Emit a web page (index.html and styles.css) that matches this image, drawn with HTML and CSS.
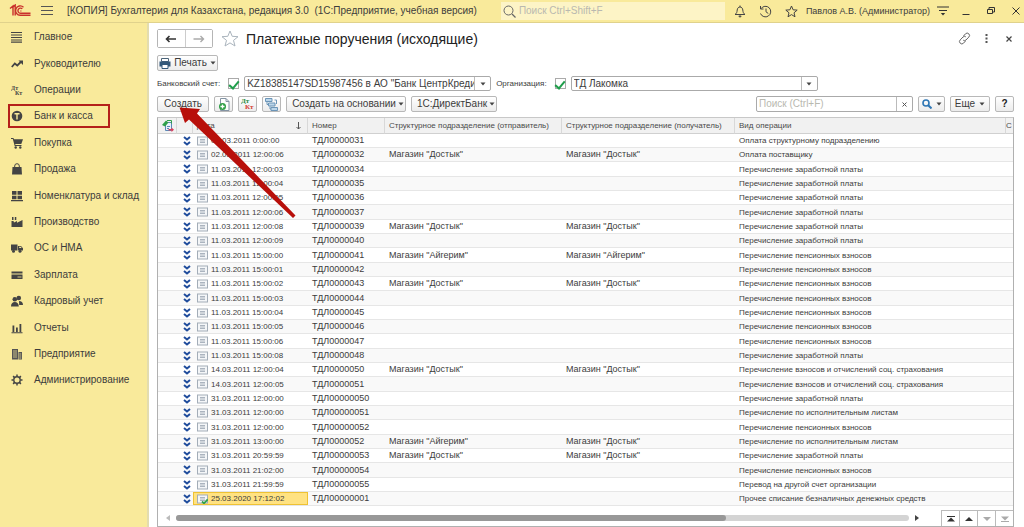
FILE: index.html
```html
<!DOCTYPE html>
<html lang="ru">
<head>
<meta charset="utf-8">
<title>Платежные поручения (исходящие)</title>
<link rel="stylesheet" href="styles.css">
</head>
<body>
<svg class="sprite" aria-hidden="true">
  <symbol id="chev" viewBox="0 0 8 10"><path d="M1 1l3 2.500L7 1M1 6l3 2.500L7 6" fill="none" stroke="#1f4c9c" stroke-width="2"/></symbol>
  <symbol id="doc" viewBox="0 0 11 10"><rect x=".5" y="1" width="10" height="8" fill="#f4f6f8" stroke="#a3adb8"/><path d="M3 3.500h5M3 5h5M3 6.500h5" stroke="#a3adb8" stroke-width=".9"/></symbol>
  <symbol id="caret" viewBox="0 0 6 4"><path d="M.5.5h5L3 3.500z" fill="#444"/></symbol>
</svg>
<header class="topbar">
  <svg class="logo" viewBox="0 0 22 14" fill="none" stroke="#c9302c" stroke-width="1.400"><path d="M1 4.500L4 2v9.500M3 4L6.200 1v10.500"/><path d="M14.500 3.200A4.700 4.700 0 1 0 11.500 11.300H21.500M13.300 4.800A2.600 2.600 0 1 0 11.500 9.300H21.500"/><path d="M11.500 7h.8"/></svg>
  <button class="icon-btn menu-btn" aria-label="Меню"><svg width="12" height="10" viewBox="0 0 12 10" stroke="#555" stroke-width="1"><path d="M0 .5h12M0 4.500h12M0 8.500h12"/></svg></button>
  <span class="app-title">[КОПИЯ] Бухгалтерия для Казахстана, редакция 3.0&nbsp; (1С:Предприятие, учебная версия)</span>
  <label class="global-search"><svg width="13" height="13" viewBox="0 0 13 13" fill="none" stroke="#666"><circle cx="5.500" cy="5.500" r="4.500"/><path d="M9 9l3.500 3.500" stroke-width="1.300"/></svg><input type="text" placeholder="Поиск Ctrl+Shift+F" aria-label="Поиск"></label>
  <div class="top-tools">
    <button class="icon-btn" aria-label="Уведомления"><svg width="12" height="13" viewBox="0 0 12 13" fill="none" stroke="#444"><path d="M1 9.500c1.700-1 2-2.500 2.200-4.500C3.400 3.300 4.300 2 6 2s2.600 1.300 2.800 3c.2 2 .5 3.500 2.200 4.500z"/><path d="M4.800 11h2.400L6 12.300zM6 .5V2"/></svg></button>
    <button class="icon-btn" aria-label="История"><svg width="13" height="13" viewBox="0 0 13 13" fill="none" stroke="#444"><path d="M2 3.700A5.300 5.300 0 1 1 1.500 8.500M1.500 1v3h3M7 3.500v3.300l2.300 1.700"/></svg></button>
    <button class="icon-btn" aria-label="Избранное"><svg width="13" height="13" viewBox="0 0 13 13" fill="none" stroke="#444"><path d="M6.500 1l1.600 3.800 4.100.3L9 7.800l1 4-3.500-2.200L3 11.800l1-4L.8 5.100l4.100-.3z"/></svg></button>
    <span class="user">Павлов А.В. (Администратор)</span>
    <button class="icon-btn" aria-label="Настройки"><svg width="12" height="10" viewBox="0 0 12 10"><path d="M0 1h12M2 4.500h8" stroke="#333"/><path d="M3.800 7h4.400L6 9.500z" fill="#333"/></svg></button>
    <button class="icon-btn win" aria-label="Свернуть"><svg width="8" height="10" viewBox="0 0 8 10"><path d="M.5 8.500h7" stroke="#333"/></svg></button>
    <button class="icon-btn win" aria-label="Развернуть"><svg width="8" height="8" viewBox="0 0 8 8" fill="none" stroke="#333"><path d="M.5 2.500h5v4h-5zM2 2.500v-2h5.500V5H5.500"/></svg></button>
    <button class="icon-btn win" aria-label="Закрыть"><svg width="8" height="8" viewBox="0 0 8 8" stroke="#333"><path d="M.5.5l7 7M7.500.5l-7 7"/></svg></button>
  </div>
</header>
<div class="shell">
  <nav class="side">
    <a href="#"><svg viewBox="0 0 12 12"><path d="M0 1.500h11M0 4h11M0 6.500h11M0 9h11M0 11.200h11" stroke="#444" stroke-width="1.200"/></svg>Главное</a>
    <a href="#"><svg viewBox="0 0 12 12"><path d="M.8 9l3-3.500 2.500 2L9.800 4" fill="none" stroke="#444" stroke-width="1.800"/><path d="M7.500 2.500H12V7z" fill="#444"/></svg>Руководителю</a>
    <a href="#"><svg viewBox="0 0 12 12" class="glyph-text"><text x="0" y="6">Дт</text><text x="4" y="11">Кт</text></svg>Операции</a>
    <a href="#" class="marked"><svg viewBox="0 0 12 12"><circle cx="6" cy="6" r="5.300" fill="#444"/><path d="M3.500 3.800h5M6 3.800V9.500" stroke="#f9ea9b" stroke-width="1.400"/></svg>Банк и касса</a>
    <a href="#"><svg viewBox="0 0 12 12" fill="#444"><path d="M0 1h2.500l.4 1.200H12L10.300 7H4.200l.3 1H10.500v1H3.700L1.800 2H0z"/><circle cx="4.700" cy="10.500" r="1.200"/><circle cx="9.300" cy="10.500" r="1.200"/></svg>Покупка</a>
    <a href="#"><svg viewBox="0 0 12 12" fill="#444"><path d="M1.500 4h9l.5 7.500H1z"/><path d="M3.700 5.500V3a2.300 2.300 0 0 1 4.600 0v2.500" fill="none" stroke="#444"/></svg>Продажа</a>
    <a href="#"><svg viewBox="0 0 12 12" fill="#444"><path d="M1 1h4.500v3.800H1zM6.500 1H11v3.800H6.500zM1 5.800h4.500v3.500H1zM6.500 5.800H11v3.500H6.500zM0 10h12v1.200H0z"/></svg>Номенклатура и склад</a>
    <a href="#"><svg viewBox="0 0 12 12" fill="#444"><path d="M.5 11V5h2L3 6.500 6 5v1.700L11.500 4v7zM1 1h1.500v3H1zM3.800 1h1.500v3H3.800z"/></svg>Производство</a>
    <a href="#"><svg viewBox="0 0 12 12" fill="#444"><path d="M0 2.500h6.500v6H0zM7 4h3l2 2.300v2.200H7z"/><circle cx="2.500" cy="9.200" r="1.500"/><circle cx="9" cy="9.200" r="1.500"/><path d="M8.200 4.800h1.500l1 1.300H8.200z" fill="#f9ea9b"/></svg>ОС и НМА</a>
    <a href="#"><svg viewBox="0 0 12 12" fill="#444"><path d="M.5 2.500h11v2H.5zM.5 5.500h11V10H.5z"/><path d="M6.500 8h4" stroke="#f9ea9b" stroke-width=".8"/></svg>Зарплата</a>
    <a href="#"><svg viewBox="0 0 12 12" fill="#444"><circle cx="7.800" cy="3" r="2.300"/><circle cx="3.800" cy="4.300" r="2.300"/><path d="M8 6c2.500 0 4 1.200 4 4H8.200zM0 11.500C0 8.500 1.500 7 3.800 7s4 1.500 4 4.500z"/></svg>Кадровый учет</a>
    <a href="#"><svg viewBox="0 0 12 12" fill="#444"><path d="M1.500 3.500h1.800V10H1.500zM5 5.500h1.800V10H5zM8.500 2h1.800v8H8.500zM.5 10.200h11v1H.5z"/></svg>Отчеты</a>
    <a href="#"><svg viewBox="0 0 12 12"><path d="M1 1h6v10.500H1zM7.500 4H11v7.500H7.500z" fill="#555"/><path d="M2 3h4M2 5h4M2 7h4M2 9h4M8.200 6h2M8.200 8h2M8.200 10h2" stroke="#f9ea9b" stroke-width=".7"/></svg>Предприятие</a>
    <a href="#"><svg viewBox="0 0 12 12" fill="none" stroke="#444"><circle cx="6" cy="6" r="3.200" stroke-width="1.400"/><path d="M6 .5v2M6 9.500v2M.5 6h2M9.500 6h2M2.100 2.100l1.500 1.500M8.400 8.400l1.500 1.500M2.100 9.900l1.500-1.500M8.400 3.600l1.500-1.500" stroke-width="1.500"/></svg>Администрирование</a>
  </nav>
  <main class="work">
    <div class="head">
      <div class="nav-pair">
        <button aria-label="Назад"><svg width="12" height="8" viewBox="0 0 12 8" fill="none" stroke="#333" stroke-width="1.600"><path d="M1.500 4H11M4.500 1l-3 3 3 3"/></svg></button>
        <button aria-label="Вперед"><svg width="12" height="8" viewBox="0 0 12 8" fill="none" stroke="#aaa" stroke-width="1.400"><path d="M.5 4h10M7.500 1l3 3-3 3"/></svg></button>
      </div>
      <button class="icon-btn fav" aria-label="В избранное"><svg width="18" height="17" viewBox="0 0 18 17" fill="none" stroke="#aab4bd"><path d="M9 1l2.200 5.300 5.800.4-4.500 3.700 1.500 5.600-5-3.100L4 16l1.500-5.600L1 6.700l5.800-.4z"/></svg></button>
      <h1>Платежные поручения (исходящие)</h1>
      <div class="head-tools">
        <button class="icon-btn" aria-label="Ссылка"><svg width="13" height="13" viewBox="0 0 13 13" fill="none" stroke="#666"><path d="M5.500 4l2-2.200a2.200 2.200 0 0 1 3.300 3.300L8 8a2.200 2.200 0 0 1-2.800.2M7.500 9l-2 2.200a2.200 2.200 0 0 1-3.300-3.300L5 5a2.200 2.200 0 0 1 2.800-.2"/></svg></button>
        <button class="icon-btn" aria-label="Еще"><svg width="3" height="10" viewBox="0 0 3 10" fill="#555"><path d="M.5 0h2v2h-2zM.5 3.500h2v2h-2zM.5 7h2v2h-2z"/></svg></button>
        <button class="icon-btn" aria-label="Закрыть"><svg width="6" height="6" viewBox="0 0 6 6" stroke="#444" stroke-width="1.200"><path d="M.5.5l5 5M5.500.5l-5 5"/></svg></button>
      </div>
    </div>
    <div class="print-row">
      <button class="btn print"><svg width="12" height="11" viewBox="0 0 12 11"><path d="M2.500.5h7v3h-7z" fill="#fff" stroke="#4b6378"/><path d="M.5 3.500h11v5H.5z" fill="#35597a"/><path d="M3 6.500h6V10.500H3z" fill="#fff" stroke="#35597a"/></svg>Печать<svg class="caret"><use href="#caret"/></svg></button>
    </div>
    <div class="filters">
      <label for="acc-on">Банковский счет:</label><input type="checkbox" id="acc-on" checked>
      <div class="combo"><input type="text" value="KZ18385147SD15987456 в АО &quot;Банк ЦентрКредит&quot;" aria-label="Банковский счет"><button aria-label="Выбрать счет"><svg class="caret"><use href="#caret"/></svg></button></div>
      <label for="org-on" class="org-label">Организация:</label><input type="checkbox" id="org-on" checked>
      <div class="combo"><input type="text" value="ТД Лакомка" aria-label="Организация"><button aria-label="Выбрать организацию"><svg class="caret"><use href="#caret"/></svg></button></div>
    </div>
    <div class="toolbar">
      <button class="btn create">Создать</button>
      <button class="btn sq" aria-label="Скопировать"><svg width="12" height="13" viewBox="0 0 12 13"><path d="M2.500.5h5.500l3 3v9h-8.500z" fill="#fff" stroke="#8494a4"/><path d="M8 .5v3h3" fill="none" stroke="#8494a4"/><circle cx="4.500" cy="8.500" r="3.500" fill="#2e9e45"/><path d="M4.500 6.500v4M2.500 8.500h4" stroke="#fff" stroke-width="1.300"/></svg></button>
      <button class="btn sq" aria-label="Проводки"><svg width="14" height="14" viewBox="0 0 14 14" class="glyph-text"><text x="0" y="6" class="g">Дт</text><text x="4" y="12" class="r">Кт</text></svg></button>
      <button class="btn sq" aria-label="Структура подчиненности"><svg width="13" height="13" viewBox="0 0 13 13" fill="#bcd6ea" stroke="#6b95b8"><path d="M2 3.500v3h2M5 8.500v2.500h2M9.500 2h2v4" fill="none"/><path d="M.5.5h6.500v3H.5zM3.500 5h6.500v3H3.500zM6 9.500h6.500v3H6z"/></svg></button>
      <button class="btn based">Создать на основании<svg class="caret"><use href="#caret"/></svg></button>
      <button class="btn direct">1С:ДиректБанк<svg class="caret"><use href="#caret"/></svg></button>
      <div class="find"><input type="text" placeholder="Поиск (Ctrl+F)" aria-label="Поиск в списке"><button aria-label="Очистить"><svg width="5" height="5" viewBox="0 0 5 5" stroke="#555"><path d="M.5.5l4 4M4.500.5l-4 4"/></svg></button></div>
      <button class="btn look" aria-label="Найти"><svg width="10" height="10" viewBox="0 0 10 10" fill="none" stroke="#2f77b5" stroke-width="1.600"><circle cx="4" cy="4" r="3"/><path d="M6.200 6.200l3.300 3.300" stroke-width="2"/></svg><svg class="caret"><use href="#caret"/></svg></button>
      <button class="btn more">Еще<svg class="caret"><use href="#caret"/></svg></button>
      <button class="btn help" aria-label="Справка">?</button>
    </div>
    <section class="list">
      <table>
        <colgroup><col class="c-a"><col class="c-b"><col class="c-date"><col class="c-num"><col class="c-from"><col class="c-to"><col><col class="c-last"></colgroup>
        <thead><tr><th><svg width="12" height="12" viewBox="0 0 12 12"><path d="M3.500 2.500h6v8h-6z" fill="#e8f1f9" stroke="#5b88b5"/><path d="M0 5L4 .5l2.500 2L3 6.500z" fill="#2fa14a"/><path d="M5 .5h4.500v3" fill="none" stroke="#2fa14a"/><path d="M5 6.500h3M5 8.500h2" stroke="#5b88b5"/><path d="M6.500 9h3V7.500l2.500 2.300L9.500 12v-1.500h-3z" fill="#d8405e"/></svg></th><th></th><th><span class="sorted">Дата<svg width="5" height="8" viewBox="0 0 5 8" fill="none" stroke="#555"><path d="M2.500 0v7M.5 5l2 2 2-2"/></svg></span></th><th>Номер</th><th>Структурное подразделение (отправитель)</th><th>Структурное подразделение (получатель)</th><th>Вид операции</th><th>С</th></tr></thead>
        <tbody>
          <tr><td></td><td><svg class="ch"><use href="#chev"/></svg></td><td><svg class="dc"><use href="#doc"/></svg>02.03.2011 0:00:00</td><td>ТДЛ0000031</td><td></td><td></td><td>Оплата структурному подразделению</td><td></td></tr>
          <tr><td></td><td><svg class="ch"><use href="#chev"/></svg></td><td><svg class="dc"><use href="#doc"/></svg>02.03.2011 12:00:06</td><td>ТДЛ0000032</td><td>Магазин "Достык"</td><td>Магазин "Достык"</td><td>Оплата поставщику</td><td></td></tr>
          <tr><td></td><td><svg class="ch"><use href="#chev"/></svg></td><td><svg class="dc"><use href="#doc"/></svg>11.03.2011 12:00:03</td><td>ТДЛ0000034</td><td></td><td></td><td>Перечисление заработной платы</td><td></td></tr>
          <tr><td></td><td><svg class="ch"><use href="#chev"/></svg></td><td><svg class="dc"><use href="#doc"/></svg>11.03.2011 12:00:04</td><td>ТДЛ0000035</td><td></td><td></td><td>Перечисление заработной платы</td><td></td></tr>
          <tr><td></td><td><svg class="ch"><use href="#chev"/></svg></td><td><svg class="dc"><use href="#doc"/></svg>11.03.2011 12:00:05</td><td>ТДЛ0000036</td><td></td><td></td><td>Перечисление заработной платы</td><td></td></tr>
          <tr><td></td><td><svg class="ch"><use href="#chev"/></svg></td><td><svg class="dc"><use href="#doc"/></svg>11.03.2011 12:00:06</td><td>ТДЛ0000037</td><td></td><td></td><td>Перечисление заработной платы</td><td></td></tr>
          <tr><td></td><td><svg class="ch"><use href="#chev"/></svg></td><td><svg class="dc"><use href="#doc"/></svg>11.03.2011 12:00:08</td><td>ТДЛ0000039</td><td>Магазин "Достык"</td><td>Магазин "Достык"</td><td>Перечисление заработной платы</td><td></td></tr>
          <tr><td></td><td><svg class="ch"><use href="#chev"/></svg></td><td><svg class="dc"><use href="#doc"/></svg>11.03.2011 12:00:09</td><td>ТДЛ0000040</td><td></td><td></td><td>Перечисление заработной платы</td><td></td></tr>
          <tr><td></td><td><svg class="ch"><use href="#chev"/></svg></td><td><svg class="dc"><use href="#doc"/></svg>11.03.2011 15:00:00</td><td>ТДЛ0000041</td><td>Магазин "Айгерим"</td><td>Магазин "Айгерим"</td><td>Перечисление пенсионных взносов</td><td></td></tr>
          <tr><td></td><td><svg class="ch"><use href="#chev"/></svg></td><td><svg class="dc"><use href="#doc"/></svg>11.03.2011 15:00:01</td><td>ТДЛ0000042</td><td></td><td></td><td>Перечисление пенсионных взносов</td><td></td></tr>
          <tr><td></td><td><svg class="ch"><use href="#chev"/></svg></td><td><svg class="dc"><use href="#doc"/></svg>11.03.2011 15:00:02</td><td>ТДЛ0000043</td><td>Магазин "Достык"</td><td>Магазин "Достык"</td><td>Перечисление пенсионных взносов</td><td></td></tr>
          <tr><td></td><td><svg class="ch"><use href="#chev"/></svg></td><td><svg class="dc"><use href="#doc"/></svg>11.03.2011 15:00:03</td><td>ТДЛ0000044</td><td></td><td></td><td>Перечисление пенсионных взносов</td><td></td></tr>
          <tr><td></td><td><svg class="ch"><use href="#chev"/></svg></td><td><svg class="dc"><use href="#doc"/></svg>11.03.2011 15:00:04</td><td>ТДЛ0000045</td><td></td><td></td><td>Перечисление пенсионных взносов</td><td></td></tr>
          <tr><td></td><td><svg class="ch"><use href="#chev"/></svg></td><td><svg class="dc"><use href="#doc"/></svg>11.03.2011 15:00:05</td><td>ТДЛ0000046</td><td></td><td></td><td>Перечисление пенсионных взносов</td><td></td></tr>
          <tr><td></td><td><svg class="ch"><use href="#chev"/></svg></td><td><svg class="dc"><use href="#doc"/></svg>11.03.2011 15:00:06</td><td>ТДЛ0000047</td><td></td><td></td><td>Перечисление пенсионных взносов</td><td></td></tr>
          <tr><td></td><td><svg class="ch"><use href="#chev"/></svg></td><td><svg class="dc"><use href="#doc"/></svg>11.03.2011 15:00:08</td><td>ТДЛ0000048</td><td></td><td></td><td>Перечисление заработной платы</td><td></td></tr>
          <tr><td></td><td><svg class="ch"><use href="#chev"/></svg></td><td><svg class="dc"><use href="#doc"/></svg>14.03.2011 12:00:04</td><td>ТДЛ0000050</td><td>Магазин "Достык"</td><td>Магазин "Достык"</td><td>Перечисление взносов и отчислений соц. страхования</td><td></td></tr>
          <tr><td></td><td><svg class="ch"><use href="#chev"/></svg></td><td><svg class="dc"><use href="#doc"/></svg>14.03.2011 12:00:05</td><td>ТДЛ0000051</td><td></td><td></td><td>Перечисление взносов и отчислений соц. страхования</td><td></td></tr>
          <tr><td></td><td><svg class="ch"><use href="#chev"/></svg></td><td><svg class="dc"><use href="#doc"/></svg>31.03.2011 12:00:00</td><td>ТДЛ00000050</td><td></td><td></td><td>Перечисление заработной платы</td><td></td></tr>
          <tr><td></td><td><svg class="ch"><use href="#chev"/></svg></td><td><svg class="dc"><use href="#doc"/></svg>31.03.2011 12:00:00</td><td>ТДЛ00000051</td><td></td><td></td><td>Перечисление по исполнительным листам</td><td></td></tr>
          <tr><td></td><td><svg class="ch"><use href="#chev"/></svg></td><td><svg class="dc"><use href="#doc"/></svg>31.03.2011 12:00:00</td><td>ТДЛ00000052</td><td></td><td></td><td>Перечисление пенсионных взносов</td><td></td></tr>
          <tr><td></td><td><svg class="ch"><use href="#chev"/></svg></td><td><svg class="dc"><use href="#doc"/></svg>31.03.2011 13:00:00</td><td>ТДЛ0000052</td><td>Магазин "Айгерим"</td><td>Магазин "Достык"</td><td>Перечисление по исполнительным листам</td><td></td></tr>
          <tr><td></td><td><svg class="ch"><use href="#chev"/></svg></td><td><svg class="dc"><use href="#doc"/></svg>31.03.2011 20:59:59</td><td>ТДЛ00000053</td><td>Магазин "Достык"</td><td>Магазин "Достык"</td><td>Перечисление заработной платы</td><td></td></tr>
          <tr><td></td><td><svg class="ch"><use href="#chev"/></svg></td><td><svg class="dc"><use href="#doc"/></svg>31.03.2011 21:02:00</td><td>ТДЛ00000054</td><td></td><td></td><td>Перечисление пенсионных взносов</td><td></td></tr>
          <tr><td></td><td><svg class="ch"><use href="#chev"/></svg></td><td><svg class="dc"><use href="#doc"/></svg>31.03.2011 21:59:59</td><td>ТДЛ00000055</td><td></td><td></td><td>Перевод на другой счет организации</td><td></td></tr>
          <tr class="current"><td></td><td><svg class="ch"><use href="#chev"/></svg></td><td class="cell"><svg class="dc" viewBox="0 0 11 10"><use href="#doc" width="11" height="10"/><path d="M5 7.500L7 9.300 10.700 5.500" fill="none" stroke="#2fa14a" stroke-width="1.800"/></svg>25.03.2020 17:12:02</td><td>ТДЛ00000001</td><td></td><td></td><td>Прочее списание безналичных денежных средств</td><td></td></tr>
        </tbody>
      </table>
      <div class="foot">
        <div class="hscroll"><svg width="4" height="6" viewBox="0 0 4 6"><path d="M4 0v6L0 3z" fill="#bbb"/></svg><div class="track"><div class="thumb"></div></div><svg width="4" height="6" viewBox="0 0 4 6"><path d="M0 0v6l4-3z" fill="#444"/></svg></div>
        <div class="pager">
          <button aria-label="В начало"><svg width="8" height="6" viewBox="0 0 8 6" fill="#333"><path d="M0 0h8v1H0zM4 1.500L8 5.500H0z"/></svg></button>
          <button aria-label="Вверх"><svg width="8" height="6" viewBox="0 0 8 6" fill="#333"><path d="M4 1l4 4H0z"/></svg></button>
          <button aria-label="Вниз"><svg width="8" height="6" viewBox="0 0 8 6" fill="#aaa"><path d="M4 5l4-4H0z"/></svg></button>
          <button aria-label="В конец"><svg width="8" height="6" viewBox="0 0 8 6" fill="#aaa"><path d="M0 5h8v1H0zM4 4.500L8 .5H0z"/></svg></button>
        </div>
      </div>
    </section>
  </main>
</div>
<svg class="pointer" width="120" height="114" viewBox="0 0 120 114" aria-hidden="true"><path d="M2.500 1.500L23 3 20 7.500 118.500 109.500 116 112 12 13.500 8 17z" fill="#b80f0a"/></svg>
</body>
</html>
```
FILE: styles.css
```css
* { box-sizing: border-box; }
body {
  margin: 0;
  min-height: 100vh;
  display: flex;
  flex-direction: column;
  background: #fff;
  color: #3c3c3c;
  font: 10px/12px "Liberation Sans", Arial, sans-serif;
}
button, input { font: inherit; color: inherit; margin: 0; }
button { padding: 0; cursor: pointer; }
svg { flex: none; }
.sprite { position: absolute; width: 0; height: 0; }
.icon-btn { display: flex; border: 0; background: none; }
.caret { width: 6px; height: 4px; }

.topbar {
  display: flex;
  align-items: center;
  height: 23px;
  padding: 0 4px 0 9px;
  background: #f9ea9b;
  border-bottom: 1px solid #e0d28c;
}
.logo { width: 22px; height: 14px; }
.menu-btn { margin-left: 10px; }
.app-title { margin-left: 14px; font-size: 10px; white-space: nowrap; }
.global-search {
  display: flex;
  align-items: center;
  gap: 3px;
  width: 224px;
  height: 18px;
  margin-left: auto;
  padding-left: 2px;
  background: #fdf4c6;
}
.global-search input { flex: 1; min-width: 0; padding: 0; border: 0; background: none; outline: 0; }
::placeholder { color: #b9b9b0; opacity: 1; }
.top-tools { display: flex; align-items: center; gap: 13px; margin-left: 9px; }
.user { margin: 0 -6px 0 -5px; font-size: 9px; white-space: nowrap; }
.win + .win { margin-left: 4px; }

.shell { flex: 1; display: flex; }
.side {
  flex: none;
  width: 149px;
  padding: 1px 0 0 8px;
  background: #f9ea9b;
  border-right: 2px solid #e3dcae;
}
.side a {
  display: flex;
  align-items: center;
  gap: 11px;
  width: 102px;
  height: 26px;
  padding-left: 3px;
  color: inherit;
  text-decoration: none;
  white-space: nowrap;
}
.side a:nth-child(5n + 2), .side a:nth-child(5n) { height: 27px; }
.side svg { width: 12px; height: 12px; }
.side .marked { height: 24px; margin: 1px 0; border: 2px solid #b5201a; padding-left: 1px; }
.glyph-text text { font: bold 6px "Liberation Serif", serif; fill: #444; }
.btn .glyph-text text { font-size: 7px; }
.glyph-text .g { fill: #2b8a3e; }
.glyph-text .r { fill: #d43a2f; }

.work {
  flex: 1;
  min-width: 0;
  display: flex;
  flex-direction: column;
  padding: 6px 10px 0 8px;
}
.head { display: flex; align-items: center; height: 19px; }
.nav-pair {
  display: flex;
  width: 56px;
  height: 19px;
  border: 1px solid #b5b5b5;
  border-radius: 2px;
}
.nav-pair button { flex: 1; display: flex; align-items: center; justify-content: center; border: 0; background: #fff; }
.nav-pair button + button { border-left: 1px solid #ccc; }
.fav { margin-left: 8px; }
h1 { margin: 0 0 0 7px; color: #222; font-size: 14px; line-height: 18px; font-weight: normal; white-space: nowrap; }
.head-tools { display: flex; align-items: center; gap: 14px; margin: 0 2px 0 auto; }
.head-tools .icon-btn:last-child { margin-left: 4px; }

.btn {
  display: flex;
  align-items: center;
  justify-content: center;
  gap: 4px;
  height: 16px;
  padding: 0 4px;
  border: 1px solid #b8b8b8;
  border-radius: 2px;
  background: linear-gradient(#fff, #ececec);
  font-size: 10px;
  white-space: nowrap;
}
.print-row { display: flex; margin-top: 7px; }
.print { width: 61px; gap: 3px; }

.filters { display: flex; align-items: center; height: 15px; margin-top: 5px; font-size: 8px; white-space: nowrap; }
.filters input[type="checkbox"] {
  flex: none;
  appearance: none;
  width: 11px;
  height: 11px;
  margin-left: 8px;
  border: 1px solid #aaa;
  background: #fff;
  display: grid;
  place-items: center;
}
.filters input[type="checkbox"]:checked::before {
  content: "";
  width: 4px;
  height: 8px;
  border: solid #1f9e4b;
  border-width: 0 2px 2px 0;
  transform: rotate(40deg);
}
.combo, .find { display: flex; border: 1px solid #aaa; border-radius: 2px; background: #fff; }
.combo { width: 247px; height: 15px; margin-left: 5px; font-size: 10px; }
.combo input, .find input { flex: 1; min-width: 0; padding: 0 0 0 2px; border: 0; background: none; outline: 0; }
.combo button, .find button { width: 16px; display: flex; align-items: center; justify-content: center; border: 0; border-left: 1px solid #bbb; background: none; }
.org-label { margin-left: 5px; }

.toolbar { display: flex; align-items: center; gap: 5px; margin-top: 5px; }
.create { width: 52px; }
.sq { width: 19px; padding: 0; }
.based { width: 120px; gap: 2px; padding: 0 2px 0 6px; }
.direct { width: 86px; gap: 2px; padding: 0 2px 0 6px; }
.find { width: 157px; height: 16px; margin-left: auto; }
.look { width: 27px; }
.more { width: 40px; }
.help { width: 19px; font-weight: bold; color: #222; }

.list {
  flex: 1;
  display: flex;
  flex-direction: column;
  margin-top: 5px;
  border: 1px solid #b0b0b0;
  border-top-color: #c8c8c8;
}
table { width: 100%; table-layout: fixed; border-collapse: separate; border-spacing: 0; font-size: 8px; line-height: 13px; }
.c-a { width: 19px; }
.c-b { width: 16px; }
.c-date { width: 115px; }
.c-num { width: 77px; }
.c-from { width: 177px; }
.c-to { width: 173px; }
.c-last { width: 7px; }
th, td { padding: 0 0 0 4px; text-align: left; white-space: nowrap; overflow: hidden; }
th { height: 16px; background: #f1f1f1; border-right: 1px solid #d8d8d8; border-bottom: 1px solid #d0d0d0; font-weight: normal; color: #4a4a4a; }
th:last-child { padding-left: 0; border-right: 0; }
th svg { display: block; }
.sorted { display: flex; align-items: center; justify-content: space-between; padding-right: 6px; }
td { height: 14px; border-bottom: 1px solid #e6e6e6; }
td:nth-child(2) { padding-left: 6px; }
td:nth-child(4), td:nth-child(5), td:nth-child(6) { font-size: 9px; }
tbody tr:nth-child(3n) td { height: 15px; }
tbody tr:nth-child(even) { background: #f9f9f9; }
td svg { vertical-align: middle; }
.ch { width: 8px; height: 10px; }
.dc { width: 11px; height: 10px; margin-right: 3px; }
tbody .current { background: #fcedbb; }
.current .cell { background: #ffe282; box-shadow: inset 0 0 0 1px #efc233; }

.foot { flex: 1; display: flex; align-items: flex-end; padding-top: 3px; }
.hscroll { flex: 1; display: flex; align-items: center; gap: 6px; height: 16px; padding: 0 22px 0 8px; }
.track { flex: 1; height: 6px; border-radius: 3px; background: #d4d4d4; }
.thumb { width: 75%; height: 6px; border-radius: 3px; background: #989898; }
.pager { display: flex; height: 16px; border-top: 1px solid #bbb; }
.pager button { width: 18px; display: flex; align-items: center; justify-content: center; border: 0; border-left: 1px solid #bbb; background: #fff; }
.pointer { position: absolute; left: 177px; top: 106px; }
```
